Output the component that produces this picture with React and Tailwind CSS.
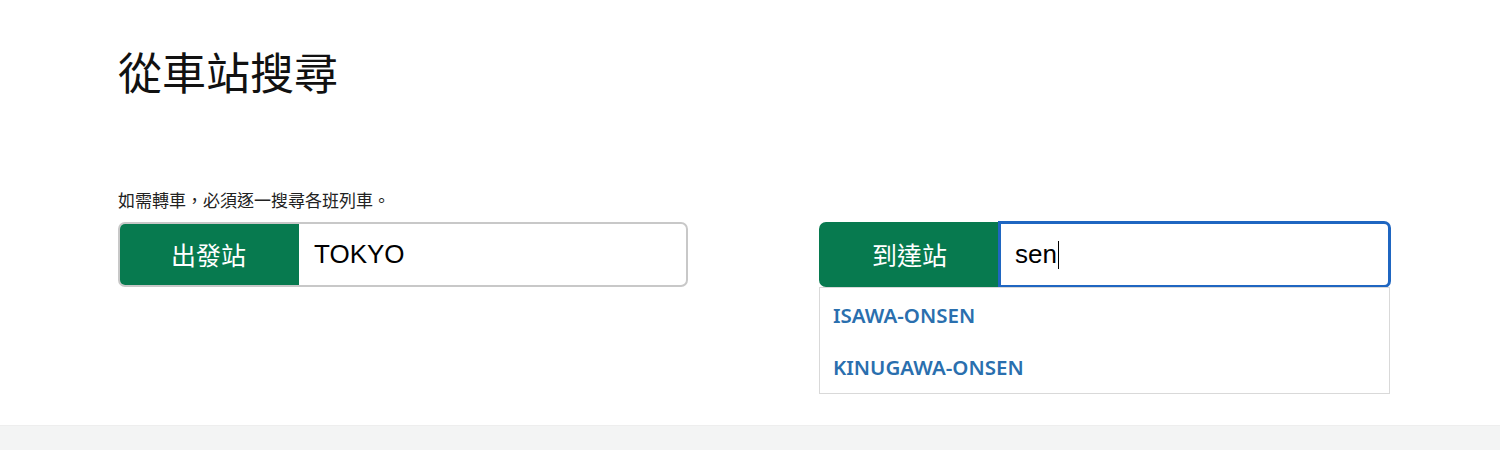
export default function App() {
  const cjk = { fontFamily: '"Noto Sans CJK TC", "Noto Sans", sans-serif' };
  return (
    <div lang="zh-TW" className="w-[1500px] h-[450px] bg-white flex flex-col overflow-hidden">
      <div className="h-[425px] pl-[118px] pt-[44px]">
        <h1 className="text-[44px] leading-[54px] font-normal text-[#111]" style={cjk}>
          從車站搜尋
        </h1>
        <div className="mt-[91px] flex gap-[131px]">
          <div className="w-[570px]">
            <p className="text-[17px] leading-[22px] text-[#222] mb-[11px]" style={cjk}>
              如需轉車，必須逐一搜尋各班列車。
            </p>
            <div className="flex h-[65px] rounded-[7px] border-2 border-[#c8c8c8] overflow-hidden">
              <div
                className="w-[181px] -ml-[2px] -my-[2px] bg-[#077a4f] rounded-l-[7px] flex items-center justify-center text-white text-[25px]"
                style={cjk}
              >
                出發站
              </div>
              <div className="flex-1 flex items-center pl-[15px] text-[26px] text-black font-['Liberation_Sans',Arial,sans-serif]">
                TOKYO
              </div>
            </div>
          </div>
          <div className="w-[572px] pt-[33px] relative">
            <div className="flex h-[65px]">
              <div
                className="w-[181px] bg-[#077a4f] rounded-l-[7px] flex items-center justify-center text-white text-[25px]"
                style={cjk}
              >
                到達站
              </div>
              <div className="flex-1 -my-[1px] -ml-[2px] flex items-center pl-[14px] rounded-r-[7px] border-[3px] border-[#1f66c1] bg-white text-[26px] text-black font-['Liberation_Sans',Arial,sans-serif]">
                sen
                <span className="inline-block w-[1px] h-[28px] bg-black ml-[1px]"></span>
              </div>
            </div>
            <div className="absolute left-0 right-[1px] top-[98px] border border-[#d9d9d9] bg-white flex flex-col pt-[1px]">
              <div className="shrink-0 py-[13px] leading-[26px] pl-[13px] text-[20.5px] font-semibold text-[#2a6fae] font-['Noto_Sans',sans-serif]">
                ISAWA-ONSEN
              </div>
              <div className="shrink-0 py-[13px] leading-[26px] pl-[13px] text-[20.5px] font-semibold text-[#2a6fae] font-['Noto_Sans',sans-serif]">
                KINUGAWA-ONSEN
              </div>
            </div>
          </div>
        </div>
      </div>
      <div className="flex-1 bg-[#f3f4f4] border-t border-[#eeeeee]"></div>
    </div>
  );
}
